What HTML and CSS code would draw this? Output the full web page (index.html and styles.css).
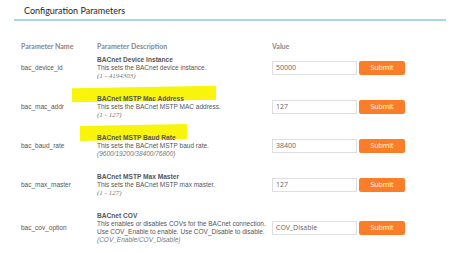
FILE: index.html
```html
<!DOCTYPE html>
<html>
  <head>
    <title>Configuration Parameters</title>
    <meta charset="UTF-8" />
    <link rel="stylesheet" href="styles.css">
  </head>

  <body>
    <div class="panel">
      <h2 class="panel-title">Configuration Parameters</h2>
      <div class="params">
        <div class="row head">
          <div class="col-name">Parameter Name</div>
          <div class="col-desc">Parameter Description</div>
          <div class="col-value">Value</div>
        </div>

        <div class="row">
          <div class="col-name">bac_device_id</div>
          <div class="col-desc">
            <b>BACnet Device Instance</b>
            <span>This sets the BACnet device instance.</span>
            <i class="serif">(1 - 4194303)</i>
          </div>
          <div class="col-value">
            <input class="field" type="text" value="50000">
            <button class="submit">Submit</button>
          </div>
        </div>

        <div class="row">
          <div class="col-name">bac_mac_addr</div>
          <div class="col-desc">
            <b class="marked"><span class="marker m1"></span>BACnet MSTP Mac Address</b>
            <span>This sets the BACnet MSTP MAC address.</span>
            <i class="serif">(1 - 127)</i>
          </div>
          <div class="col-value">
            <input class="field" type="text" value="127">
            <button class="submit">Submit</button>
          </div>
        </div>

        <div class="row">
          <div class="col-name">bac_baud_rate</div>
          <div class="col-desc">
            <b class="marked"><span class="marker m2"></span>BACnet MSTP Baud Rate</b>
            <span>This sets the BACnet MSTP baud rate.</span>
            <i>(9600/19200/38400/76800)</i>
          </div>
          <div class="col-value">
            <input class="field" type="text" value="38400">
            <button class="submit">Submit</button>
          </div>
        </div>

        <div class="row">
          <div class="col-name">bac_max_master</div>
          <div class="col-desc">
            <b>BACnet MSTP Max Master</b>
            <span>This sets the BACnet MSTP max master.</span>
            <i class="serif">(1 - 127)</i>
          </div>
          <div class="col-value">
            <input class="field" type="text" value="127">
            <button class="submit">Submit</button>
          </div>
        </div>

        <div class="row">
          <div class="col-name">bac_cov_option</div>
          <div class="col-desc">
            <b>BACnet COV</b>
            <span>This enables or disables COVs for the BACnet connection.</span>
            <span>Use COV_Enable to enable. Use COV_Disable to disable.</span>
            <i>(COV_Enable/COV_Disable)</i>
          </div>
          <div class="col-value">
            <input class="field" type="text" value="COV_Disable">
            <button class="submit">Submit</button>
          </div>
        </div>
      </div>
    </div>
  </body>
</html>
```

FILE: styles.css
```css
* {
  box-sizing: border-box;
  margin: 0;
  padding: 0;
}

body {
  background: #ffffff;
  font-family: "Open Sans", sans-serif;
  color: #555;
}

.panel {
  padding: 4px 5px 0 14px;
}

.panel-title {
  font-family: "Lato", sans-serif;
  font-size: 9px;
  font-weight: 400;
  color: #1f1f1f;
  line-height: 14px;
  padding-left: 10px;
  padding-bottom: 1px;
  border-bottom: 2px solid #a9d6e8;
}

.params {
  padding-left: 7px;
  padding-top: 20px;
}

.row {
  display: grid;
  grid-template-columns: 76px 175px auto;
  align-items: center;
  padding: 7.5px 0;
}

.row.head {
  padding: 0;
  margin-bottom: -3px;
  font-family: "Lato", sans-serif;
  font-weight: 700;
  font-size: 7px;
  color: #888;
  line-height: 10px;
}

.col-name {
  font-family: "Liberation Sans", sans-serif;
  font-size: 6.5px;
  color: #555;
}

.head .col-name {
  font-family: "Lato", sans-serif;
  font-size: 7px;
  color: #888;
}

.col-desc {
  display: flex;
  flex-direction: column;
  font-family: "Liberation Sans", sans-serif;
  font-size: 6.5px;
  line-height: 8px;
  color: #555;
  white-space: nowrap;
}

.head .col-desc {
  font-family: "Lato", sans-serif;
  font-size: 7px;
  line-height: 10px;
  color: #888;
}

.col-desc b {
  font-weight: 700;
  color: #555;
  font-size: 6.6px;
}

.col-desc i {
  color: #777;
}

.col-desc i.serif {
  font-family: "Liberation Serif", serif;
  font-size: 7px;
}

.marked {
  position: relative;
}

.marker {
  position: absolute;
  background: #f8f40e;
  z-index: -1;
  transform: rotate(-1deg);
}

.m1 {
  left: -25px;
  top: -8px;
  width: 144px;
  height: 14px;
}

.m2 {
  left: -17px;
  top: -9px;
  width: 107px;
  height: 15px;
}

.col-value {
  display: flex;
  align-items: center;
  gap: 2px;
}

.field {
  width: 85px;
  height: 14px;
  border: 1px solid #dedede;
  padding: 0 3px;
  font-family: "Open Sans", sans-serif;
  font-size: 7px;
  color: #666;
  outline: none;
}

.submit {
  width: 46px;
  height: 14px;
  border: none;
  border-radius: 2px;
  background: #fb7d27;
  color: #fff;
  font-family: "Open Sans", sans-serif;
  font-size: 7px;
}
```
